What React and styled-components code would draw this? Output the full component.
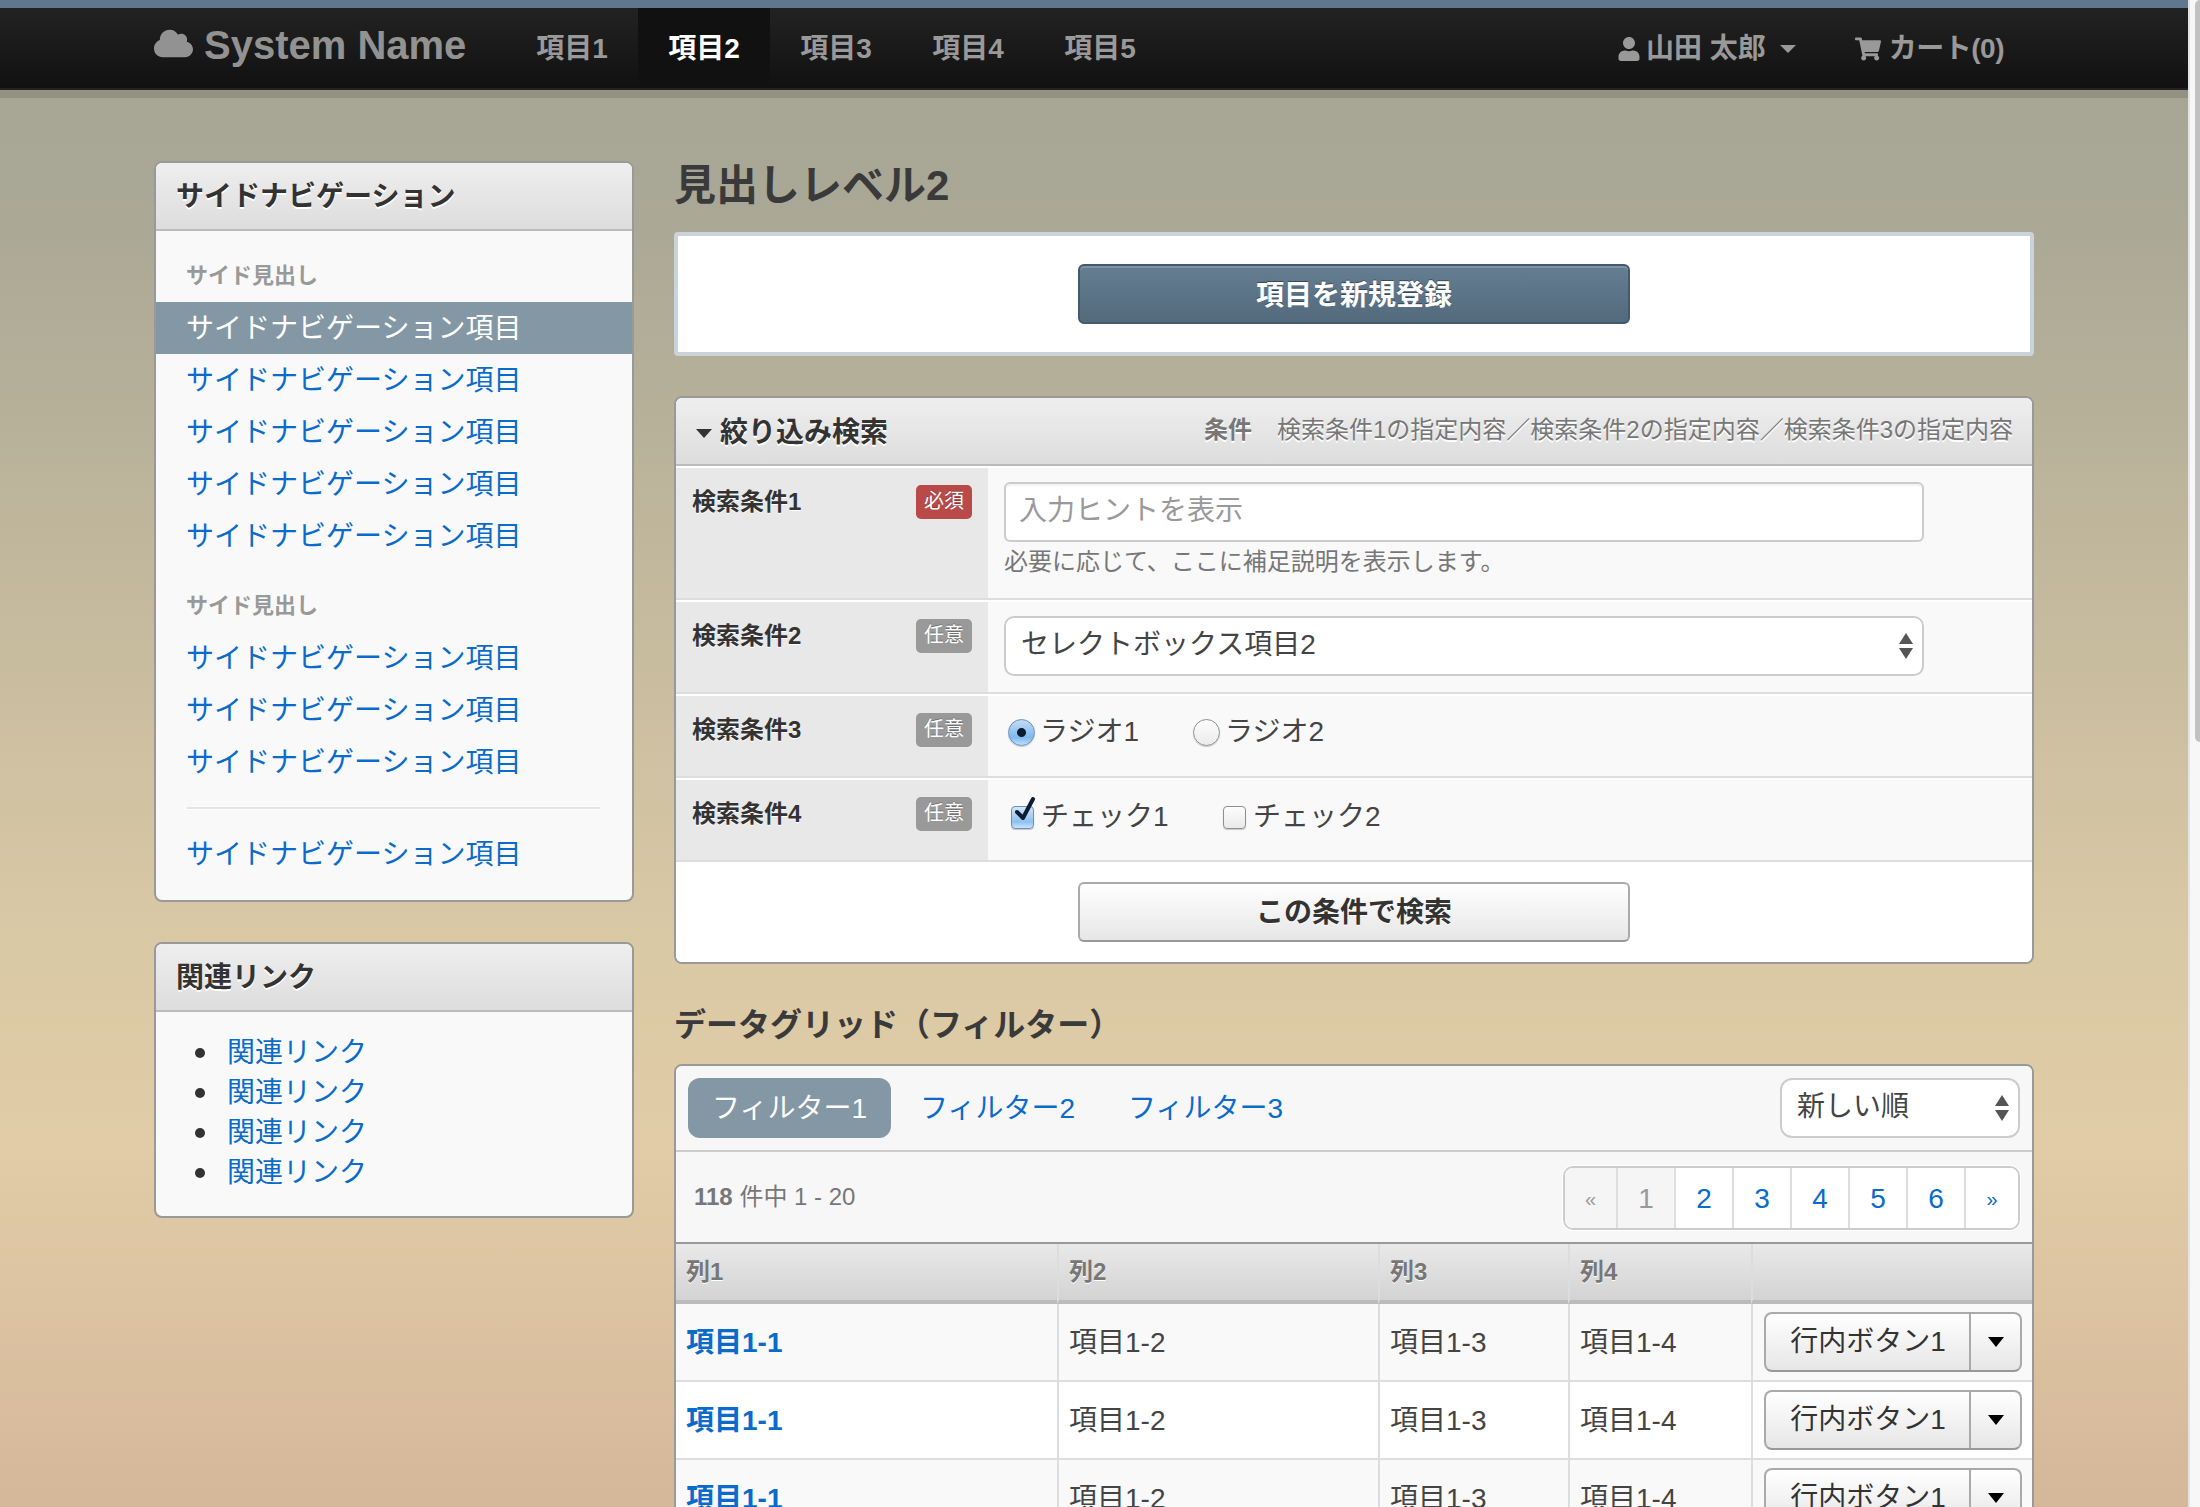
import React from 'react'
import styled, { createGlobalStyle } from 'styled-components'
import { FaCloud, FaUser, FaShoppingCart } from 'react-icons/fa'

const GlobalStyle = createGlobalStyle`
  html, body {
    margin: 0;
    height: 100%;
    overflow: hidden;
  }
  body {
    font-family: "Liberation Sans", "Noto Sans CJK JP", sans-serif;
    font-size: 28px;
    line-height: 40px;
    color: #333;
  }
  * {
    box-sizing: border-box;
  }
`

const LINK = '#0a6bcb'

const Shell = styled.div`
  display: flex;
  height: 100vh;
`

const Page = styled.div`
  flex: 1;
  min-width: 0;
  height: 100%;
  overflow: hidden;
  background: linear-gradient(
    180deg,
    #a6a594 0,
    #a9a795 200px,
    #b6b099 400px,
    #cbbea0 700px,
    #dac9a5 950px,
    #e1cca7 1150px,
    #d5b79a 1507px
  );
`

const ScrollTrack = styled.div`
  width: 12px;
  flex: none;
  background: #f7f7f7;
  border-left: 2px solid #e4e4e4;
  padding-left: 5px;
`

const ScrollThumb = styled.div`
  height: 742px;
  background: #c2c2c2;
  border-radius: 5px 0 0 5px;
`

const Navbar = styled.div`
  border-top: 8px solid #5f788f;
  height: 90px;
  background: linear-gradient(#222, #111);
  border-bottom: 2px solid #222;
  box-shadow: 0 8px 0 rgba(0, 0, 0, 0.12);
`

const NavInner = styled.div`
  width: 1880px;
  margin: 0 auto;
  height: 80px;
  display: flex;
  align-items: stretch;
`

const Brand = styled.div`
  width: 352px;
  display: flex;
  align-items: center;
  gap: 11px;
  color: #929292;
  font-size: 40px;
  font-weight: bold;
  padding-bottom: 6px;
  svg {
    width: 39px;
    height: 39px;
    margin-top: -4px;
  }
`

const NavItem = styled.div`
  width: 132px;
  display: flex;
  align-items: center;
  justify-content: center;
  padding-top: 2px;
  font-weight: bold;
  color: ${p => (p.$active ? '#fff' : '#999')};
  background: ${p => (p.$active ? '#111' : 'transparent')};
`

const NavRight = styled.div`
  margin-left: auto;
  display: flex;
  align-items: center;
  padding-top: 2px;
  color: #999;
  font-weight: bold;
  padding-right: 30px;
`

const UserMenu = styled.div`
  display: flex;
  align-items: center;
  gap: 6px;
  margin-right: 59px;
  svg {
    width: 22px;
    height: 24px;
  }
`

const Caret = styled.span`
  display: inline-block;
  width: 0;
  height: 0;
  border-left: 8px solid transparent;
  border-right: 8px solid transparent;
  border-top: ${p => p.$h || 8}px solid ${p => p.$color || '#999'};
  margin-left: ${p => p.$ml || 0}px;
`

const CartLink = styled.div`
  display: flex;
  align-items: center;
  gap: 8px;
  letter-spacing: -0.5px;
  svg {
    width: 26px;
    height: 24px;
  }
`

const Container = styled.div`
  width: 1880px;
  margin: 0 auto;
  padding-top: 71px;
  display: grid;
  grid-template-columns: 480px 1360px;
  column-gap: 40px;
  align-items: start;
`

const Panel = styled.div`
  border: 2px solid #999;
  border-radius: 8px;
  background: #f9f9f9;
  overflow: hidden;
  margin-bottom: ${p => p.$mb || 0}px;
`

const PanelHead = styled.div`
  height: 68px;
  padding: 2px 20px 0;
  display: flex;
  align-items: center;
  font-weight: bold;
  color: #333;
  background: linear-gradient(#eee, #ddd);
  border-bottom: 2px solid #bbb;
  text-shadow: 0 2px 0 #fff;
`

const SideBody = styled.div`
  padding: 19px 0 20px;
`

const SideHeading = styled.div`
  height: 52px;
  line-height: 52px;
  padding-left: 30px;
  font-size: 22px;
  font-weight: bold;
  color: #999;
  margin-top: ${p => p.$mt || 0}px;
`

const SideItem = styled.a`
  display: block;
  height: 52px;
  line-height: 54px;
  padding-left: 30px;
  color: ${p => (p.$active ? '#fff' : LINK)};
  background: ${p => (p.$active ? '#8497a5' : 'transparent')};
`

const SideDivider = styled.div`
  height: 3px;
  margin: 19px 32px 18px 31px;
  background: #e5e5e5;
  border-bottom: 1px solid #fff;
`

const LinkList = styled.ul`
  margin: 0;
  padding: 21px 0 23px 39px;
  list-style: none;
  li {
    height: 40px;
    display: flex;
    align-items: center;
    gap: 22px;
  }
  li::before {
    content: '';
    width: 10px;
    height: 10px;
    border-radius: 50%;
    background: #333;
  }
  a {
    color: ${LINK};
  }
`

const Main = styled.div`
  min-width: 0;
`

const Title = styled.h2`
  margin: 0 0 21px;
  font-size: 42px;
  line-height: 50px;
  color: #3a3a3a;
`

const ActionBox = styled.div`
  height: 124px;
  background: #fff;
  border: 4px solid #cbd3da;
  border-radius: 4px;
  display: flex;
  align-items: center;
  justify-content: center;
  margin-bottom: 40px;
`

const PrimaryButton = styled.button`
  width: 552px;
  height: 60px;
  padding: 0 0 2px;
  font: bold 28px "Liberation Sans", "Noto Sans CJK JP", sans-serif;
  color: #fff;
  border: 2px solid #44596b;
  border-radius: 6px;
  background: linear-gradient(#647e92, #536a7c);
  box-shadow: inset 0 2px 0 #7f95a6;
  text-shadow: 0 -1px 0 rgba(0, 0, 0, 0.4);
`

const SearchHead = styled(PanelHead)`
  justify-content: space-between;
  padding: 4px 19px 0 20px;
`

const HeadTitle = styled.div`
  display: flex;
  align-items: center;
  gap: 8px;
`

const Conditions = styled.div`
  font-size: 24px;
  font-weight: normal;
  color: #777;
  margin-top: -6px;
  b {
    margin-right: 25px;
  }
`

const FormRow = styled.div`
  display: grid;
  grid-template-columns: 312px 1fr;
  height: ${p => p.$h}px;
  border-top: 2px solid #fff;
  border-bottom: 2px solid #ddd;
`

const LabelCell = styled.div`
  background: #e8e8e8;
  display: flex;
  justify-content: space-between;
  align-items: flex-start;
  padding: 17px 16px 0 16px;
`

const LabelText = styled.div`
  font-size: 24px;
  font-weight: bold;
  line-height: 34px;
  color: #333;
  text-shadow: 0 1px 0 #fff;
`

const Badge = styled.span`
  width: 56px;
  height: 34px;
  border-radius: 5px;
  font-size: 20px;
  line-height: 33px;
  text-align: center;
  color: #fff;
  background: ${p => (p.$required ? '#b94a48' : '#999')};
  text-shadow: 0 -1px 0 rgba(0, 0, 0, 0.25);
`

const ValueCell = styled.div`
  padding: ${p => p.$pt || 14}px 16px 0;
`

const TextInput = styled.input`
  display: block;
  width: 920px;
  height: 60px;
  padding: 0 13px 3px;
  border: 2px solid #ccc;
  border-radius: 6px;
  background: #fff;
  box-shadow: inset 0 2px 2px rgba(0, 0, 0, 0.05);
  font: 28px "Liberation Sans", "Noto Sans CJK JP", sans-serif;
  outline: 0;
  &::placeholder {
    color: #999;
    opacity: 1;
  }
`

const HelpText = styled.div`
  font-size: 24px;
  line-height: 36px;
  color: #777;
  margin-top: 2px;
`

const SelectWrap = styled.div`
  position: relative;
  width: ${p => p.$w}px;
  height: ${p => p.$h}px;
  svg {
    position: absolute;
    right: 11px;
    top: 50%;
    width: 14px;
    height: 26px;
    margin-top: -13px;
    pointer-events: none;
  }
`

const Select = styled.select`
  appearance: none;
  width: 100%;
  height: 100%;
  padding: 0 ${p => p.$pl}px 4px;
  border: 2px solid #ccc;
  border-radius: ${p => p.$radius}px;
  background: #fff;
  color: #444;
  font: 28px "Liberation Sans", "Noto Sans CJK JP", sans-serif;
  outline: 0;
`

const ChoiceRow = styled.div`
  display: flex;
  align-items: center;
  height: 30px;
  color: #444;
`

const Choice = styled.label`
  display: flex;
  align-items: center;
  position: relative;
  width: ${p => p.$w}px;
`

const Radio = styled.input.attrs({ type: 'radio' })`
  appearance: none;
  flex: none;
  width: 27px;
  height: 27px;
  margin: 0 5px 0 4px;
  border-radius: 50%;
  border: 1px solid #8f8f8f;
  background: linear-gradient(#fdfdfd, #ebebeb);
  box-shadow: 0 1px 1px rgba(0, 0, 0, 0.2);
  &:checked {
    border-color: #6e8fb5;
    background: radial-gradient(circle, #0c1c33 0 4px, transparent 5px),
      linear-gradient(#c3dcf6, #7fb8f0 70%, #c0e0fb);
  }
`

const Check = styled.input.attrs({ type: 'checkbox' })`
  appearance: none;
  flex: none;
  width: 23px;
  height: 23px;
  margin: 0 7px 0 7px;
  border-radius: 4px;
  border: 1px solid #8f8f8f;
  background: linear-gradient(#fdfdfd, #e9e9e9);
  box-shadow: 0 1px 1px rgba(0, 0, 0, 0.2);
  &:checked {
    border-color: #6e8fb5;
    background: linear-gradient(#d3e6f9, #8fc0f1 70%, #c8e4fb);
  }
`

const CheckMark = styled.svg`
  position: absolute;
  left: 8px;
  top: -1px;
  width: 24px;
  height: 26px;
  overflow: visible;
`

const SearchFoot = styled.div`
  background: #fff;
  padding: 20px 0 20px;
  display: flex;
  justify-content: center;
`

const DefaultButton = styled.button`
  width: 552px;
  height: 60px;
  padding: 0 0 4px;
  font: bold 28px "Liberation Sans", "Noto Sans CJK JP", sans-serif;
  color: #333;
  border: 2px solid #aaa;
  border-bottom-color: #999;
  border-radius: 6px;
  background: linear-gradient(#fff, #e6e6e6);
  text-shadow: 0 1px 0 #fff;
`

const SectionTitle = styled.h3`
  margin: 41px 0 19px;
  font-size: 32px;
  line-height: 40px;
  color: #3a3a3a;
`

const FilterBar = styled.div`
  height: 86px;
  padding: 12px 12px 12px 12px;
  background: #f7f7f7;
  border-bottom: 2px solid #ccc;
  display: flex;
  align-items: stretch;
  gap: 5px;
`

const FilterTab = styled.a`
  height: 60px;
  line-height: 62px;
  padding: 0 24px;
  border-radius: 12px;
  color: ${p => (p.$active ? '#fff' : LINK)};
  background: ${p => (p.$active ? '#8497a5' : 'transparent')};
`

const SortWrap = styled.div`
  margin-left: auto;
`

const PagerBar = styled.div`
  height: 92px;
  padding: 14px 12px 0 18px;
  background: #f7f7f7;
  border-bottom: 2px solid #999;
  display: flex;
  justify-content: space-between;
  align-items: flex-start;
`

const PagerInfo = styled.div`
  font-size: 24px;
  line-height: 62px;
  color: #777;
`

const Pager = styled.div`
  display: flex;
  height: 64px;
  border: 2px solid #ccc;
  border-radius: 10px;
  overflow: hidden;
  box-shadow: 0 0 0 1px #fff;
  background: #fff;
`

const PageCell = styled.a`
  width: ${p => p.$w || 58}px;
  display: flex;
  align-items: center;
  justify-content: center;
  padding-top: 2px;
  border-left: ${p => (p.$first ? '0' : '2px solid #ddd')};
  color: ${p => (p.$off ? '#999' : LINK)};
  background: ${p => (p.$off ? '#f5f5f5' : '#fff')};
  font-size: ${p => (p.$small ? 20 : 28)}px;
`

const Table = styled.table`
  width: 100%;
  table-layout: fixed;
  border-collapse: separate;
  border-spacing: 0;
`

const Th = styled.th`
  height: 60px;
  padding: 0 0 0 10px;
  text-align: left;
  font-size: 24px;
  color: #777;
  background: linear-gradient(#e9e9e9, #d3d3d3);
  border-bottom: 4px solid #bbb;
  border-left: ${p => (p.$first ? '0' : '2px solid #ddd')};
  text-shadow: 0 1px 0 #fff;
`

const Td = styled.td`
  height: 78px;
  padding: 2px 0 0 10px;
  color: #444;
  background: ${p => (p.$odd ? '#f9f9f9' : '#fff')};
  border-bottom: 2px solid #ddd;
  border-left: ${p => (p.$first ? '0' : '2px solid #ddd')};
`

const RowLink = styled.a`
  color: ${LINK};
  font-weight: bold;
`

const RowButtons = styled.div`
  display: flex;
  width: 258px;
  height: 60px;
  margin: -2px 0 0 1px;
  border: 2px solid #aaa;
  border-bottom-color: #999;
  border-radius: 8px;
  background: linear-gradient(#fff, #e6e6e6);
  color: #333;
`

const RowMain = styled.div`
  width: 205px;
  padding-left: 1px;
  text-align: center;
  line-height: 56px;
  border-right: 2px solid #aaa;
`

const RowCaret = styled.div`
  flex: 1;
  display: flex;
  align-items: center;
  justify-content: center;
`

const SelectArrows = () => (
  <svg viewBox="0 0 14 26">
    <path d="M7 0l7 11H0z" fill="#555" />
    <path d="M7 26L0 15h14z" fill="#555" />
  </svg>
)

const sideGroup1 = [1, 2, 3, 4]
const sideGroup2 = [1, 2, 3]
const links = [1, 2, 3, 4]
const rows = [1, 2, 3, 4]
const pages = [2, 3, 4, 5, 6]
const columns = [
  { label: '列1', width: 381 },
  { label: '列2', width: 321 },
  { label: '列3', width: 190 },
  { label: '列4', width: 183 },
  { label: '', width: 281 }
]

const App = () => {
  return (
    <>
      <GlobalStyle />
      <Shell>
        <Page>
          <Navbar>
            <NavInner>
              <Brand><FaCloud />System Name</Brand>
              <NavItem>項目1</NavItem>
              <NavItem $active>項目2</NavItem>
              <NavItem>項目3</NavItem>
              <NavItem>項目4</NavItem>
              <NavItem>項目5</NavItem>
              <NavRight>
                <UserMenu><FaUser />山田 太郎<Caret $ml={8} /></UserMenu>
                <CartLink><FaShoppingCart />カート(0)</CartLink>
              </NavRight>
            </NavInner>
          </Navbar>

          <Container>
            <aside>
              <Panel $mb={40}>
                <PanelHead>サイドナビゲーション</PanelHead>
                <SideBody>
                  <SideHeading>サイド見出し</SideHeading>
                  <SideItem $active>サイドナビゲーション項目</SideItem>
                  {sideGroup1.map(i => <SideItem key={i}>サイドナビゲーション項目</SideItem>)}
                  <SideHeading $mt={18}>サイド見出し</SideHeading>
                  {sideGroup2.map(i => <SideItem key={i}>サイドナビゲーション項目</SideItem>)}
                  <SideDivider />
                  <SideItem>サイドナビゲーション項目</SideItem>
                </SideBody>
              </Panel>
              <Panel>
                <PanelHead>関連リンク</PanelHead>
                <LinkList>
                  {links.map(i => <li key={i}><a>関連リンク</a></li>)}
                </LinkList>
              </Panel>
            </aside>

            <Main>
              <Title>見出しレベル2</Title>
              <ActionBox>
                <PrimaryButton>項目を新規登録</PrimaryButton>
              </ActionBox>

              <Panel>
                <SearchHead>
                  <HeadTitle><Caret $color="#333" $h={9} />絞り込み検索</HeadTitle>
                  <Conditions>
                    <b>条件</b>検索条件1の指定内容／検索条件2の指定内容／検索条件3の指定内容
                  </Conditions>
                </SearchHead>
                <FormRow $h={134}>
                  <LabelCell>
                    <LabelText>検索条件1</LabelText>
                    <Badge $required>必須</Badge>
                  </LabelCell>
                  <ValueCell>
                    <TextInput placeholder="入力ヒントを表示" />
                    <HelpText>必要に応じて、ここに補足説明を表示します。</HelpText>
                  </ValueCell>
                </FormRow>
                <FormRow $h={94}>
                  <LabelCell>
                    <LabelText>検索条件2</LabelText>
                    <Badge>任意</Badge>
                  </LabelCell>
                  <ValueCell>
                    <SelectWrap $w={920} $h={60}>
                      <Select $radius={10} $pl={15} defaultValue="2">
                        <option value="2">セレクトボックス項目2</option>
                      </Select>
                      <SelectArrows />
                    </SelectWrap>
                  </ValueCell>
                </FormRow>
                <FormRow $h={84}>
                  <LabelCell>
                    <LabelText>検索条件3</LabelText>
                    <Badge>任意</Badge>
                  </LabelCell>
                  <ValueCell $pt={21}>
                    <ChoiceRow>
                      <Choice $w={185}><Radio name="cond3" defaultChecked />ラジオ1</Choice>
                      <Choice><Radio name="cond3" />ラジオ2</Choice>
                    </ChoiceRow>
                  </ValueCell>
                </FormRow>
                <FormRow $h={84}>
                  <LabelCell>
                    <LabelText>検索条件4</LabelText>
                    <Badge>任意</Badge>
                  </LabelCell>
                  <ValueCell $pt={22}>
                    <ChoiceRow>
                      <Choice $w={212}>
                        <Check defaultChecked />
                        <CheckMark viewBox="0 0 24 26">
                          <path d="M5 16l6 6L21 3" fill="none" stroke="#0c1c33" strokeWidth="4" strokeLinecap="round" strokeLinejoin="round" />
                        </CheckMark>
                        チェック1
                      </Choice>
                      <Choice><Check />チェック2</Choice>
                    </ChoiceRow>
                  </ValueCell>
                </FormRow>
                <SearchFoot>
                  <DefaultButton>この条件で検索</DefaultButton>
                </SearchFoot>
              </Panel>

              <SectionTitle>データグリッド（フィルター）</SectionTitle>

              <Panel>
                <FilterBar>
                  <FilterTab $active>フィルター1</FilterTab>
                  <FilterTab>フィルター2</FilterTab>
                  <FilterTab>フィルター3</FilterTab>
                  <SortWrap>
                    <SelectWrap $w={240} $h={60}>
                      <Select $radius={12} $pl={15} defaultValue="new">
                        <option value="new">新しい順</option>
                      </Select>
                      <SelectArrows />
                    </SelectWrap>
                  </SortWrap>
                </FilterBar>
                <PagerBar>
                  <PagerInfo><b>118</b> 件中 1 - 20</PagerInfo>
                  <Pager>
                    <PageCell $first $off $small $w={51}>«</PageCell>
                    <PageCell $off>1</PageCell>
                    {pages.map(p => <PageCell key={p}>{p}</PageCell>)}
                    <PageCell $small $w={54}>»</PageCell>
                  </Pager>
                </PagerBar>
                <Table>
                  <colgroup>
                    {columns.map(c => <col key={c.label || 'actions'} width={c.width} />)}
                  </colgroup>
                  <thead>
                    <tr>
                      {columns.map((c, i) => <Th key={c.label || 'actions'} $first={i === 0}>{c.label}</Th>)}
                    </tr>
                  </thead>
                  <tbody>
                    {rows.map(r => (
                      <tr key={r}>
                        <Td $first $odd={r % 2 === 1}><RowLink>項目1-1</RowLink></Td>
                        <Td $odd={r % 2 === 1}>項目1-2</Td>
                        <Td $odd={r % 2 === 1}>項目1-3</Td>
                        <Td $odd={r % 2 === 1}>項目1-4</Td>
                        <Td $odd={r % 2 === 1}>
                          <RowButtons>
                            <RowMain>行内ボタン1</RowMain>
                            <RowCaret><Caret $color="#000" $h={10} /></RowCaret>
                          </RowButtons>
                        </Td>
                      </tr>
                    ))}
                  </tbody>
                </Table>
              </Panel>
            </Main>
          </Container>
        </Page>
        <ScrollTrack><ScrollThumb /></ScrollTrack>
      </Shell>
    </>
  )
}

export default App
